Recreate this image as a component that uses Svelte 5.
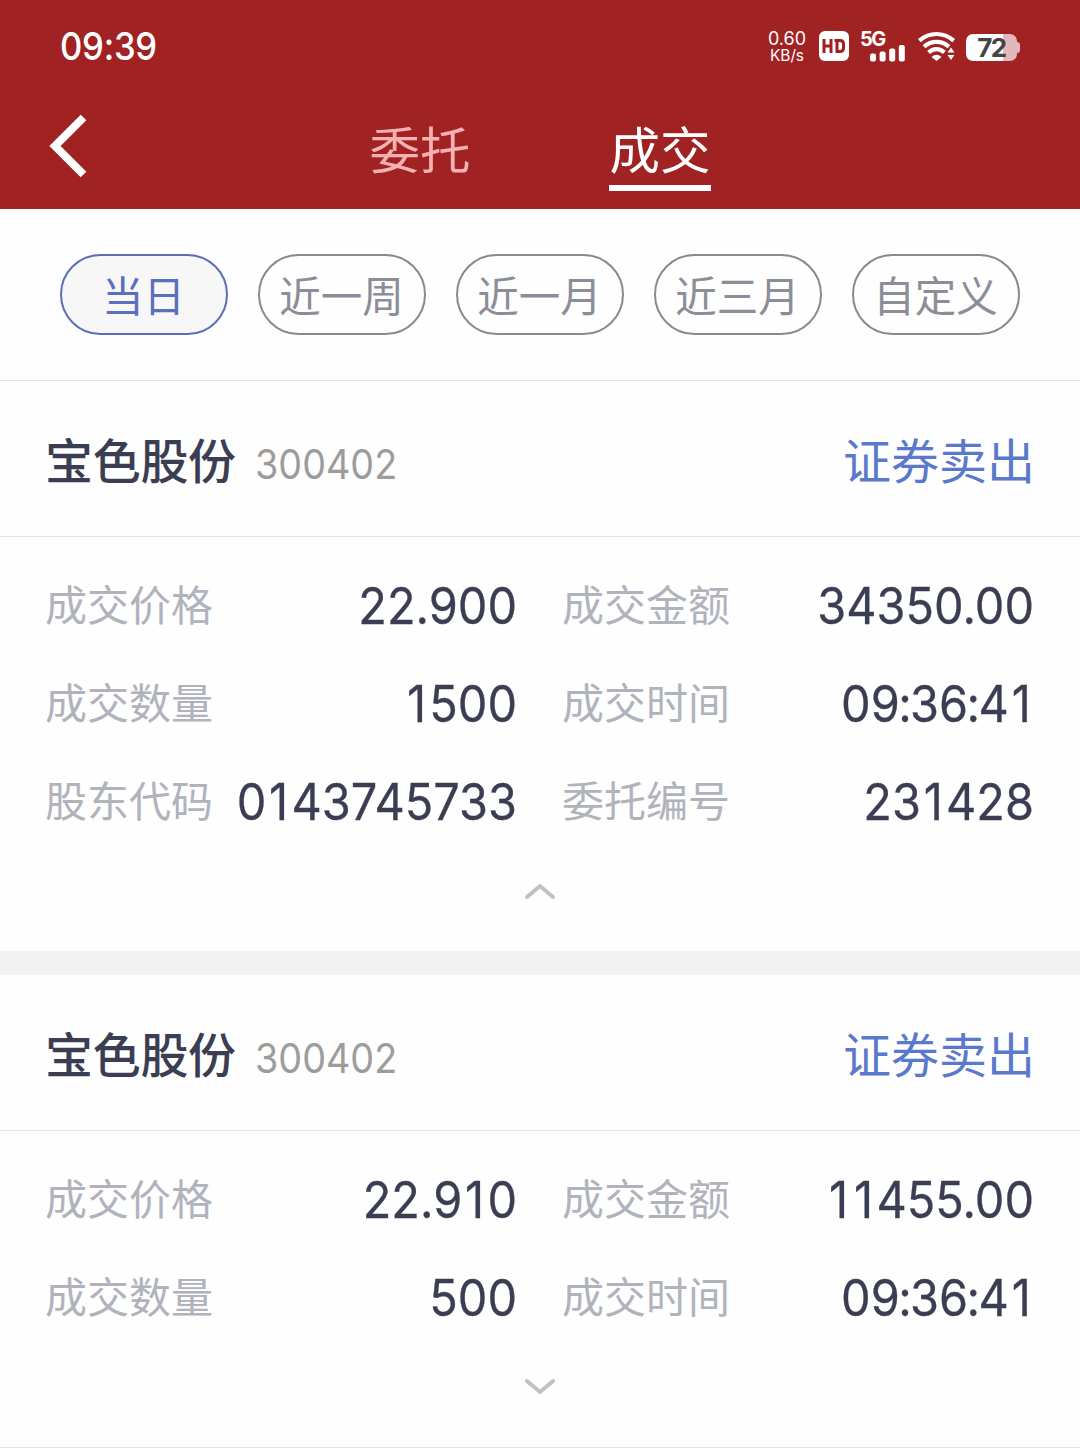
<script>
  const periods = ['当日', '近一周', '近一月', '近三月', '自定义'];
  let active = $state('当日');

  const trades = [
    {
      name: '宝色股份',
      code: '300402',
      side: '证券卖出',
      open: true,
      fields: [
        ['成交价格', '22.900'],
        ['成交金额', '34350.00'],
        ['成交数量', '1500'],
        ['成交时间', '09:36:41'],
        ['股东代码', '0143745733'],
        ['委托编号', '231428']
      ]
    },
    {
      name: '宝色股份',
      code: '300402',
      side: '证券卖出',
      open: false,
      fields: [
        ['成交价格', '22.910'],
        ['成交金额', '11455.00'],
        ['成交数量', '500'],
        ['成交时间', '09:36:41']
      ]
    }
  ];

  // The digit 1 and the colon get their own spacing in the number face.
  const runs = (value) => value.split(/([1:])/).filter(Boolean);
</script>

<div class="screen">
  <header>
    <div class="status">
      <span class="clock">09:39</span>
      <div class="indicators">
        <div class="speed"><span class="rate">0.60</span><span class="unit">KB/s</span></div>
        <svg class="hd" width="30" height="30" viewBox="0 0 30 30">
          <rect width="30" height="30" rx="6" fill="#fff" />
          <path d="M5 8v14M12 8v14M5 15h7M18 9.500v11h3q3.500 0 3.500-3.500v-4q0-3.500-3.500-3.500h-5.500" fill="none" stroke="#a02020" stroke-width="3" />
        </svg>
        <div class="cell">
          <span class="net">5G</span>
          <svg width="36" height="18" viewBox="0 0 36 18" fill="#fff">
            <rect x="0" y="8.500" width="6" height="8" rx="2" />
            <rect x="9.600" y="6.500" width="6" height="10" rx="2" />
            <rect x="19.200" y="3.500" width="6" height="13" rx="2" />
            <rect x="28.800" y="0" width="6" height="16.500" rx="2" />
          </svg>
        </div>
        <svg class="wifi" width="38" height="30" viewBox="0 0 38 30">
          <g fill="none" stroke="#fff" stroke-width="4.200">
            <path d="M1.300 9.600Q9 3 18.500 3t17.200 6.600" />
            <path d="M6 15.700Q11.500 10.800 18.500 10.800t12.500 4.900" />
            <path d="M10.600 21.500Q14 18.200 18.500 18.200t7.900 3.300" />
          </g>
          <path d="M13.500 26Q18.500 21.500 23.500 26L18.500 30z M29.500 21.500h7L33 16.500z M29.500 24h7L33 29z" fill="#fff" />
        </svg>
        <div class="battery">
          <span>72</span>
        </div>
      </div>
    </div>
    <nav>
      <svg class="back" width="40" height="64" viewBox="0 0 40 64">
        <path d="M35.500 3.500L7 32l28.500 28.500" fill="none" stroke="#fff" stroke-width="8" />
      </svg>
      <button class="tab">委托</button>
      <button class="tab current">成交</button>
    </nav>
  </header>

  <div class="periods">
    {#each periods as p}
      <button class="pill" class:on={active === p} onclick={() => (active = p)}>{p}</button>
    {/each}
  </div>

  {#each trades as t}
    <section>
      <div class="title">
        <span class="name">{t.name}</span>
        <span class="code">{t.code}</span>
        <span class="side">{t.side}</span>
      </div>
      <dl>
        {#each t.fields as [label, value]}
          <div class="field">
            <dt>{label}</dt>
            <dd>{#each runs(value) as run}<span class:one={run === '1'} class:colon={run === ':'}>{run}</span>{/each}</dd>
          </div>
        {/each}
      </dl>
      <div class="toggle">
        <svg width="32" height="18" viewBox="0 0 32 18">
          <path d={t.open ? 'M3 15L16 4L29 15' : 'M3 3L16 14L29 3'} fill="none" stroke="#c0c1c6" stroke-width="4" stroke-linecap="round" />
        </svg>
      </div>
    </section>
  {/each}
</div>

<style>
  :global(body) { margin: 0; background: #fff; }
  .screen {
    width: 1080px;
    height: 1448px;
    overflow: hidden;
    background: #fefefe;
    font-family: Inter, 'Noto Sans CJK SC', sans-serif;
    color: #3b3e52;
  }
  button { font: inherit; padding: 0; border: 0; background: none; }
  header { height: 209px; background: #a12222; color: #fff; }
  .status {
    height: 92px;
    display: flex;
    justify-content: space-between;
    align-items: center;
    padding: 0 63px 0 60px;
    box-sizing: border-box;
  }
  .clock {
    font-size: 38.500px;
    line-height: 93px;
    letter-spacing: -0.300px;
    font-weight: 500;
    transform: scaleX(0.9);
    transform-origin: left;
  }
  .indicators { display: flex; align-items: center; height: 92px; }
  .speed {
    width: 38px;
    display: flex;
    flex-direction: column;
    align-items: center;
    gap: 1px;
    padding-top: 3px;
    margin-right: 2px;
    white-space: nowrap;
  }
  .rate { font-size: 18px; line-height: 16px; height: 16px; }
  .unit { font-size: 15.500px; line-height: 16px; height: 16px; letter-spacing: -0.100px; }
  .hd { margin-left: 11px; }
  .cell { margin-left: 11px; width: 47px; height: 32px; }
  .net { display: block; font-size: 20px; line-height: 18px; height: 15px; font-weight: 700; letter-spacing: -1.500px; }
  .cell svg { display: block; margin-left: 10px; }
  .wifi { margin-left: 11px; }
  .battery {
    margin-left: 10px;
    width: 51px;
    height: 27px;
    margin-top: 2px;
    border-radius: 7px;
    background: linear-gradient(90deg, #fff 37px, #e2b9bb 37px);
    color: #444;
    font-size: 26px;
    line-height: 28px;
    font-weight: 700;
    letter-spacing: -1.500px;
    text-align: center;
    position: relative;
  }
  .battery::after {
    content: '';
    position: absolute;
    left: 51px;
    top: 8px;
    width: 3px;
    height: 11px;
    border-radius: 0 3px 3px 0;
    background: #e2b9bb;
  }
  nav { height: 117px; display: flex; align-items: flex-start; }
  .back { margin: 22px 281px 0 48px; }
  .tab {
    width: 102px;
    height: 99px;
    margin-right: 138px;
    box-sizing: border-box;
    font-size: 50.500px;
    line-height: 118px;
    color: #f4b0b2;
    border-bottom: 6px solid transparent;
    white-space: nowrap;
  }
  .current { color: #fff; border-color: #fff; }
  .periods {
    height: 172px;
    box-sizing: border-box;
    border-bottom: 1px solid #e3e3e3;
    padding: 45px 60px 0;
    display: flex;
    gap: 30px;
  }
  .pill {
    width: 168px;
    height: 81px;
    box-sizing: border-box;
    border: 2px solid #888a91;
    border-radius: 41px;
    color: #8b8d97;
    font-size: 41.500px;
    line-height: 76px;
    padding: 4px 1px 0 0;
    white-space: nowrap;
    display: flex;
    align-items: center;
    justify-content: center;
  }
  .on { color: #5b6fc0; border-color: #5b6fb8; background: #f7f7f7; }
  .title {
    height: 156px;
    box-sizing: border-box;
    padding: 6px 45px 0 45px;
    border-bottom: 1px solid #e3e3e3;
    display: flex;
    align-items: center;
    line-height: 150px;
  }
  .name { font-size: 48px; font-weight: 500; letter-spacing: -0.300px; }
  .code {
    font-size: 41.500px;
    color: #9c9c9c;
    margin: 4px 0 0 19px;
    transform: scaleX(0.91);
    transform-origin: left;
  }
  .side { font-size: 48px; color: #5b79cc; margin-left: auto; }
  dl {
    margin: 0;
    padding: 19px 46px 0 45px;
    display: grid;
    grid-template-columns: 472px 472px;
    column-gap: 45px;
  }
  .field { height: 98px; display: flex; justify-content: space-between; align-items: center; }
  dt { font-size: 42px; color: #b1b3bc; white-space: nowrap; padding-bottom: 6px; }
  dd {
    margin: 0;
    padding-top: 1px;
    width: 0;
    display: flex;
    justify-content: flex-end;
    font-size: 50px;
    -webkit-text-stroke: 0.300px #3b3e52;
    white-space: nowrap;
    transform: scaleX(0.938);
    transform-origin: right;
  }
  .one { padding: 0 3.500px 0 3px; }
  .colon { margin: 0 -1.700px; }
  .toggle { height: 101px; box-sizing: border-box; padding-top: 32px; }
  .toggle svg { display: block; margin: 0 auto; }
  section + section { border-top: 24px solid #f1f1f1; }
  section:last-child { border-bottom: 1px solid #e3e3e3; }
</style>
